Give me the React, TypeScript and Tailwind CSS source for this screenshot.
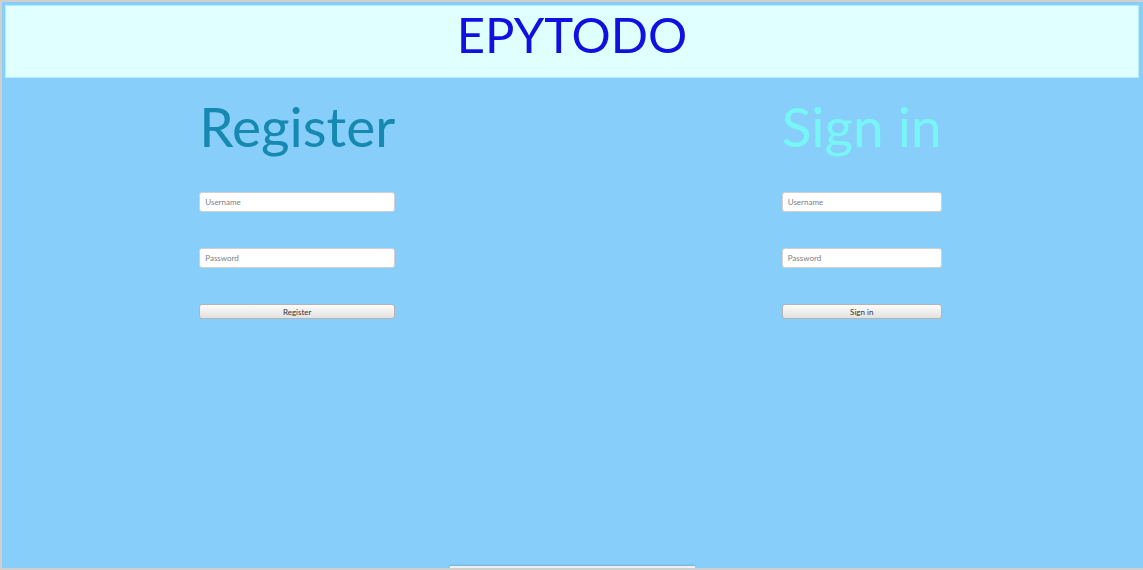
export default function App() {
  const font = { fontFamily: "Lato, 'Noto Sans', sans-serif" };
  return (
    <div
      className="h-[570px] w-[1143px] overflow-hidden bg-[#87cefa] border-t-2 border-l-2 border-b-2 border-[#cfcfcf] flex flex-col"
      style={font}
    >
      <header className="ml-[3px] mt-[3px] mr-[4px] h-[73px] bg-[#e0ffff] border border-[#b8ecfc] flex justify-center pt-[4px]">
        <h1 className="text-[49px] leading-none text-[#1010e0]">EPYTODO</h1>
      </header>

      <main className="flex justify-around pt-[21px] pl-[4px] pr-[8px]">
        <section className="flex flex-col">
          <h2 className="text-[55px] leading-none text-[#1589b0]">Register</h2>
          <div className="flex flex-col mt-[38px] gap-[36px]">
            <input
              placeholder="Username"
              className="h-[20px] w-full rounded-[3px] bg-white border border-[#d0d0d0] px-[5px] text-[8px] placeholder:text-[#808080] outline-none"
            />
            <input
              placeholder="Password"
              type="password"
              className="h-[20px] w-full rounded-[3px] bg-white border border-[#d0d0d0] px-[5px] text-[8px] placeholder:text-[#808080] outline-none"
            />
            <button className="h-[15px] w-full rounded-[3px] border border-[#b4b4b4] bg-gradient-to-b from-[#fbfbfb] to-[#e4e2df] text-[8px] font-normal text-[#333] leading-none">
              Register
            </button>
          </div>
        </section>

        <section className="flex flex-col">
          <h2 className="text-[55px] leading-none text-[#78f6f6]">Sign in</h2>
          <div className="flex flex-col mt-[38px] gap-[36px]">
            <input
              placeholder="Username"
              className="h-[20px] w-full rounded-[3px] bg-white border border-[#d0d0d0] px-[5px] text-[8px] placeholder:text-[#808080] outline-none"
            />
            <input
              placeholder="Password"
              type="password"
              className="h-[20px] w-full rounded-[3px] bg-white border border-[#d0d0d0] px-[5px] text-[8px] placeholder:text-[#808080] outline-none"
            />
            <button className="h-[15px] w-full rounded-[3px] border border-[#b4b4b4] bg-gradient-to-b from-[#fbfbfb] to-[#e4e2df] text-[8px] font-normal text-[#333] leading-none">
              Sign in
            </button>
          </div>
        </section>
      </main>

      <div className="mt-auto mx-auto w-[245px] h-[2px] bg-[#f0f0f0] shadow-[0_-1px_2px_rgba(0,0,0,0.15)]" />
    </div>
  );
}
